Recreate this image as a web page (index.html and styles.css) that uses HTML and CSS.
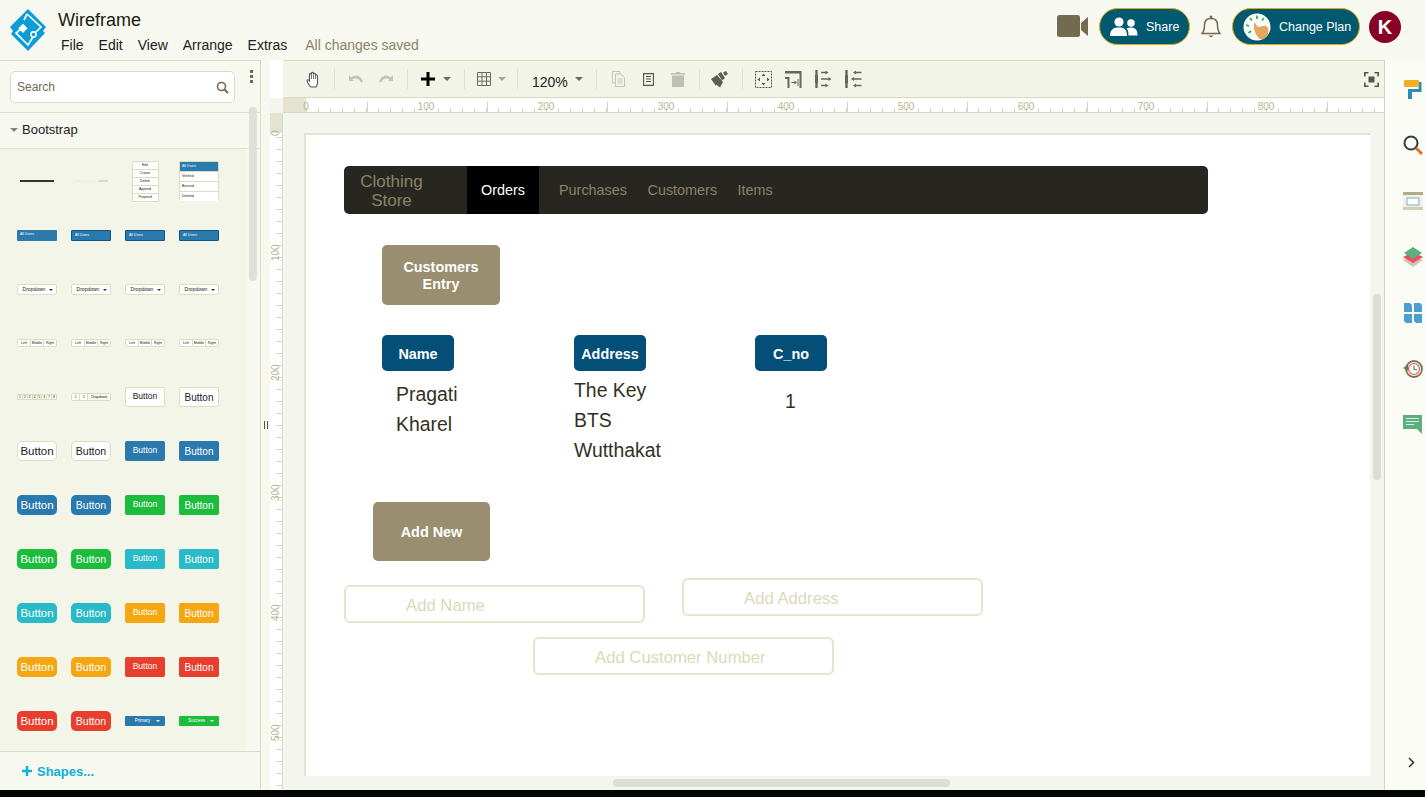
FILE: index.html

```html
<!DOCTYPE html>
<html lang="en">
<head>
    <meta charset="UTF-8">
    <title>Wireframe</title>
    <link rel="stylesheet" href="styles.css">
</head>
<body>
    <header class="topbar">
        <svg class="logo" width="38" height="44" viewBox="0 0 38 44">
            <path d="M19 1L37 19L34 23L36 25L19 43L2 26L4 23L1 19Z" fill="#0c9cd6"/>
            <path d="M18 6L32 19L26.500 24.500M12 21L7 25L19 37L24 29M18 6L15 12" fill="none" stroke="#fff" stroke-width="1.700"/>
            <rect x="11" y="17" width="6.500" height="6.500" transform="rotate(45 14 20)" fill="#fff"/>
            <circle cx="24.500" cy="26.500" r="2.600" fill="none" stroke="#fff" stroke-width="1.600"/>
        </svg>
        <div class="title-block">
            <div class="doc-title">Wireframe</div>
            <nav class="menu">
                <span>File</span><span>Edit</span><span>View</span><span>Arrange</span><span>Extras</span>
                <span class="saved">All changes saved</span>
            </nav>
        </div>
        <div class="top-actions">
            <svg width="32" height="23" viewBox="0 0 32 23">
                <rect x="0" y="0" width="23" height="22" rx="2.500" fill="#746a4f"/>
                <path d="M24 8L31 2V21L24 15Z" fill="#746a4f"/>
            </svg>
            <div class="pill share-pill">
                <svg width="28" height="20" viewBox="0 0 28 20">
                    <circle cx="9" cy="5" r="4.600" fill="#fff"/>
                    <path d="M0 19C0 12 4 10.500 9 10.500S17 12 17 19Z" fill="#fff"/>
                    <circle cx="21" cy="6" r="3.800" fill="#fff"/>
                    <path d="M18.500 18.500C18.500 14 17.500 12.500 16.500 11.500C18 10.800 19.500 10.500 21 10.500C25 10.500 27.500 12.500 27.500 18.500Z" fill="#fff"/>
                </svg>
                <span>Share</span>
            </div>
            <svg class="bell" width="20" height="23" viewBox="0 0 20 23">
                <path d="M1 18.500C3 16.500 3.500 15 3.500 10C3.500 6 6 3.500 10 3.500S16.500 6 16.500 10C16.500 15 17 16.500 19 18.500Z" fill="none" stroke="#746a4f" stroke-width="1.500"/>
                <circle cx="10" cy="2" r="1.500" fill="#746a4f"/>
                <path d="M7.500 20.500H12.500L10 22.500Z" fill="#746a4f"/>
            </svg>
            <div class="pill plan-pill">
                <svg width="28" height="28" viewBox="0 0 28 28">
                    <circle cx="14" cy="14" r="13.500" fill="#fff"/>
                    <path d="M14 2.500V6M7 5L9 7.500M21 5L19 7.500M3 12L6 13M5.500 20L8 18" stroke="#1cbd3c" stroke-width="1.800"/>
                    <path d="M11 9L15 14L22 12.500C25 13 26 17 25 21C24 25 20 27 17 26C14 24 12 20 11 16Z" fill="#e8a55e"/>
                </svg>
                <span>Change Plan</span>
            </div>
            <div class="avatar">K</div>
        </div>
    </header>

    <main class="workspace">
        <aside class="sidebar">
            <div class="search-row">
                <div class="search">
                    <span>Search</span>
                    <svg width="13" height="13" viewBox="0 0 13 13">
                        <circle cx="5.500" cy="5.500" r="4" fill="none" stroke="#746a4f" stroke-width="1.600"/>
                        <path d="M8.500 8.500L12 12" stroke="#746a4f" stroke-width="2"/>
                    </svg>
                </div>
                <div class="dots"><i></i><i></i><i></i></div>
            </div>
            <div class="section-head"><b class="caret"></b>Bootstrap</div>
            <div class="palette">
                <div class="cell"><div class="rule-line"></div></div>
                <div class="cell"><div class="rule-faint"></div></div>
                <div class="cell">
                    <div class="mini-menu"><span>Edit</span><span>Create</span><span>Delete</span><span>Append</span><span>Prepend</span></div>
                </div>
                <div class="cell">
                    <div class="mini-list"><span class="on">All Users</span><span>Verified</span><span>Banned</span><span>Deleted</span></div>
                </div>

                <div class="cell"><div class="mini-bar">All Users</div></div>
                <div class="cell"><div class="mini-bar dark">All Users</div></div>
                <div class="cell"><div class="mini-bar dark">All Users</div></div>
                <div class="cell"><div class="mini-bar dark">All Users</div></div>

                <div class="cell"><div class="mini-drop">Dropdown<b></b></div></div>
                <div class="cell"><div class="mini-drop">Dropdown<b></b></div></div>
                <div class="cell"><div class="mini-drop">Dropdown<b></b></div></div>
                <div class="cell"><div class="mini-drop">Dropdown<b></b></div></div>

                <div class="cell"><div class="mini-group"><span>Left</span><span>Middle</span><span>Right</span></div></div>
                <div class="cell"><div class="mini-group"><span>Left</span><span>Middle</span><span>Right</span></div></div>
                <div class="cell"><div class="mini-group"><span>Left</span><span>Middle</span><span>Right</span></div></div>
                <div class="cell"><div class="mini-group"><span>Left</span><span>Middle</span><span>Right</span></div></div>

                <div class="cell"><div class="mini-pages"><span>1</span><span>2</span><span>3</span><span>4</span><span>5</span><span>6</span><span>7</span><span>8</span></div></div>
                <div class="cell"><div class="mini-group split"><span>1</span><span>2</span><span>Dropdown</span></div></div>
                <div class="cell"><div class="btn size-a white">Button</div></div>
                <div class="cell"><div class="btn size-b white">Button</div></div>

                <div class="cell"><div class="btn size-c white">Button</div></div>
                <div class="cell"><div class="btn size-d white">Button</div></div>
                <div class="cell"><div class="btn size-a blue">Button</div></div>
                <div class="cell"><div class="btn size-b blue">Button</div></div>

                <div class="cell"><div class="btn size-c blue">Button</div></div>
                <div class="cell"><div class="btn size-d blue">Button</div></div>
                <div class="cell"><div class="btn size-a green">Button</div></div>
                <div class="cell"><div class="btn size-b green">Button</div></div>

                <div class="cell"><div class="btn size-c green">Button</div></div>
                <div class="cell"><div class="btn size-d green">Button</div></div>
                <div class="cell"><div class="btn size-a teal">Button</div></div>
                <div class="cell"><div class="btn size-b teal">Button</div></div>

                <div class="cell"><div class="btn size-c teal">Button</div></div>
                <div class="cell"><div class="btn size-d teal">Button</div></div>
                <div class="cell"><div class="btn size-a orange">Button</div></div>
                <div class="cell"><div class="btn size-b orange">Button</div></div>

                <div class="cell"><div class="btn size-c orange">Button</div></div>
                <div class="cell"><div class="btn size-d orange">Button</div></div>
                <div class="cell"><div class="btn size-a red">Button</div></div>
                <div class="cell"><div class="btn size-b red">Button</div></div>

                <div class="cell"><div class="btn size-c red">Button</div></div>
                <div class="cell"><div class="btn size-d red">Button</div></div>
                <div class="cell"><div class="mini-split blue">Primary<b></b></div></div>
                <div class="cell"><div class="mini-split green">Success<b></b></div></div>
            </div>
            <div class="side-scroll"></div>
            <div class="shapes-link">
                <svg width="10" height="10" viewBox="0 0 10 10"><path d="M3.800 0H6.200V3.800H10V6.200H6.200V10H3.800V6.200H0V3.800H3.800Z" fill="#0db0d8"/></svg>
                <span>Shapes...</span>
            </div>
        </aside>

        <div class="gutter"><i class="splitter"></i></div>

        <section class="editor">
            <div class="patch"></div>
            <div class="toolbar">
                <div class="tool first">
                    <svg width="15" height="17" viewBox="0 0 15 17">
                        <path d="M4 15C2.500 13 1 11 1 9.500C1 8.500 2.500 8.500 3.500 10V3.500C3.500 2 5 2 5.500 3.500V2.500C5.500 1 7.500 1 7.500 2.500V3C8 1.800 9.500 2 9.500 3.500V4.500C10 3.500 11.500 3.800 11.500 5V12C11.500 14 11 15 10 16H5Z" fill="#fff" stroke="#555" stroke-width="1.100"/>
                        <path d="M5.500 3.500V8M7.500 3V8M9.500 4V8" stroke="#555" stroke-width="0.800"/>
                    </svg>
                </div>
                <i class="sep"></i>
                <div class="tool">
                    <svg width="16" height="10" viewBox="0 0 16 10"><path d="M1 1V7H6L4.500 5.500C7 3.500 11 4 13 8.500L15 8C13 1 7 0 3.500 3.500Z" fill="#c5c5b6"/></svg>
                </div>
                <div class="tool">
                    <svg width="16" height="10" viewBox="0 0 16 10"><path d="M15 1V7H10L11.500 5.500C9 3.500 5 4 3 8.500L1 8C3 1 9 0 12.500 3.500Z" fill="#c5c5b6"/></svg>
                </div>
                <i class="sep"></i>
                <div class="tool plus-tool">
                    <svg width="14" height="14" viewBox="0 0 14 14"><path d="M5.500 0H8.500V5.500H14V8.500H8.500V14H5.500V8.500H0V5.500H5.500Z" fill="#000"/></svg>
                </div>
                <b class="caret tool-caret"></b>
                <i class="sep wide"></i>
                <div class="tool table-tool">
                    <svg width="14" height="14" viewBox="0 0 14 14"><path d="M.500 .500H13.500V13.500H.500ZM.500 4.800H13.500M.500 9.200H13.500M5 .500V13.500M9.500 .500V13.500" fill="none" stroke="#6b6b5e"/></svg>
                </div>
                <b class="caret tool-caret light"></b>
                <i class="sep mid"></i>
                <div class="zoom-level">120%</div>
                <b class="caret tool-caret"></b>
                <i class="sep zoom-sep"></i>
                <div class="tool">
                    <svg width="13" height="16" viewBox="0 0 13 16"><path d="M.500 .500H8V3M.500 .500V12H3.500M3.500 3H8.500L12.500 6.500V15.500H3.500ZM5.500 8H10.500M5.500 10H10.500M5.500 12H10.500" fill="none" stroke="#c5c5b6"/></svg>
                </div>
                <div class="tool">
                    <svg width="11" height="13" viewBox="0 0 11 13"><path d="M.600 .600H10.400V12.400H.600ZM3 3.500H8M3 6H8M3 8.500H8" fill="none" stroke="#55554c" stroke-width="1.100"/></svg>
                </div>
                <div class="tool">
                    <svg width="14" height="15" viewBox="0 0 14 15"><path d="M5 0H9V1H14V2.500H0V1H5ZM1 3.500H13V15H1Z" fill="#c0c0b2"/></svg>
                </div>
                <i class="sep"></i>
                <div class="tool broom-tool">
                    <svg width="18" height="17" viewBox="0 0 18 17">
                        <path d="M0 8L6 4L12 11L9 16.500L5 13.500L5 15Z" fill="#5e5e55"/>
                        <path d="M7 3L10 1L14 7L11 9.500Z" fill="#5e5e55"/>
                        <path d="M12 1.500L15 0L17 3L14 5Z" fill="#5e5e55"/>
                    </svg>
                </div>
                <i class="sep tight"></i>
                <div class="tool">
                    <svg width="17" height="17" viewBox="0 0 17 17">
                        <rect x=".500" y=".500" width="16" height="16" fill="none" stroke="#55554c" stroke-dasharray="2 1"/>
                        <path d="M8.500 2.500L10.500 5H6.500ZM8.500 14.500L10.500 12H6.500ZM2.500 8.500L5 6.500V10.500ZM14.500 8.500L12 6.500V10.500Z" fill="#55554c"/>
                    </svg>
                </div>
                <div class="tool">
                    <svg width="17" height="17" viewBox="0 0 17 17">
                        <path d="M0 0H16.500V17H14.500V2.500H0Z" fill="#66665c"/>
                        <path d="M0 6H4.500V17H2.500V8H0Z" fill="#66665c"/>
                        <path d="M6.500 11.500H11" stroke="#66665c"/>
                        <path d="M9.500 9.500L12 11.500L9.500 13.500Z" fill="#66665c"/>
                        <path d="M13 8V15" stroke="#66665c"/>
                    </svg>
                </div>
                <div class="tool">
                    <svg width="17" height="18" viewBox="0 0 17 18">
                        <path d="M1.500 0V18" stroke="#66665c" stroke-width="2.400"/>
                        <path d="M0 5H3V13H0Z" fill="#66665c"/>
                        <path d="M6 2.500H11M6 9H14M6 15.500H11" stroke="#66665c" stroke-width="1.300"/>
                        <path d="M10.500 .500L13.500 2.500L10.500 4.500ZM13.500 7L16.500 9L13.500 11ZM10.500 13.500L13.500 15.500L10.500 17.500Z" fill="#66665c"/>
                    </svg>
                </div>
                <div class="tool">
                    <svg width="17" height="18" viewBox="0 0 17 18">
                        <path d="M1.500 0V18" stroke="#66665c" stroke-width="2.400"/>
                        <path d="M0 5H3V13H0Z" fill="#66665c"/>
                        <path d="M11 2.500H16.500M9 9H16.500M11 15.500H16.500" stroke="#66665c" stroke-width="1.300"/>
                        <path d="M11 .500L8 2.500L11 4.500ZM9 7L6 9L9 11ZM11 13.500L8 15.500L11 17.500Z" fill="#66665c"/>
                    </svg>
                </div>
                <div class="tool full-tool">
                    <svg width="15" height="15" viewBox="0 0 15 15">
                        <path d="M.800 4.500V.800H4.500M10.500 .800H14.200V4.500M14.200 10.500V14.200H10.500M4.500 14.200H.800V10.500" fill="none" stroke="#55554c" stroke-width="1.600"/>
                        <rect x="4.500" y="4.500" width="6" height="6" fill="#55554c"/>
                    </svg>
                </div>
            </div>

            <div class="ruler-blank"></div>
            <div class="h-ruler">
                <span>0</span><span>100</span><span>200</span><span>300</span><span>400</span><span>500</span><span>600</span><span>700</span><span>800</span>
            </div>

            <div class="v-ruler">
                <span>0</span><span>100</span><span>200</span><span>300</span><span>400</span><span>500</span>
            </div>
            <div class="canvas">
                <div class="page">
                    <div class="wf-nav">
                        <div class="wf-brand">Clothing<br>Store</div>
                        <div class="wf-active">Orders</div>
                        <div class="wf-links"><span>Purchases</span><span>Customers</span><span>Items</span></div>
                    </div>
                    <div class="wf-btn tan entry">Customers<br>Entry</div>
                    <div class="wf-btn navy col-name">Name</div>
                    <div class="wf-btn navy col-address">Address</div>
                    <div class="wf-btn navy col-no">C_no</div>
                    <div class="wf-text val-name">Pragati<br>Kharel</div>
                    <div class="wf-text val-address">The Key<br>BTS<br>Wutthakat</div>
                    <div class="wf-text val-no">1</div>
                    <div class="wf-btn tan add-new">Add New</div>
                    <div class="wf-input in-name">Add Name</div>
                    <div class="wf-input in-address">Add Address</div>
                    <div class="wf-input in-number">Add Customer Number</div>
                </div>
                <div class="thumb-v"></div>
                <div class="thumb-h"></div>
            </div>
        </section>

        <aside class="rail">
            <svg width="18" height="19" viewBox="0 0 18 19">
                <rect x="0" y="0" width="15" height="7" rx="1" fill="#eeb022"/>
                <path d="M15 2H17.500V12H8V19H4V9H14.500V7H15Z" fill="#2f8ab5"/>
            </svg>
            <svg width="20" height="21" viewBox="0 0 20 21">
                <circle cx="8" cy="8" r="6.500" fill="#fff" stroke="#2f4040" stroke-width="2"/>
                <path d="M13 13L19 19" stroke="#e8711f" stroke-width="3"/>
            </svg>
            <svg width="20" height="18" viewBox="0 0 20 18">
                <rect x="0" y="0" width="20" height="18" fill="#f3f1e4"/>
                <rect x="0" y="0" width="20" height="3" fill="#b0ab90"/>
                <rect x="0" y="15" width="20" height="3" fill="#d3ceb6"/>
                <rect x="4" y="6" width="12" height="7" fill="#fff" stroke="#6eb2d0"/>
            </svg>
            <svg width="20" height="20" viewBox="0 0 20 20">
                <path d="M0 13L10 8L20 13L10 20Z" fill="#cfc8aa"/>
                <path d="M0 10L10 5L20 10L10 16Z" fill="#ee4d66"/>
                <path d="M1 6L10 0L19 6L10 12Z" fill="#5bae7d"/>
            </svg>
            <svg width="18" height="20" viewBox="0 0 18 20">
                <path d="M0 0H6L8 2V9H0ZM10 0H16L18 2V9H10ZM0 11H8V20H2L0 18ZM10 11H18V20H12L10 18Z" fill="#4a9fd0"/>
            </svg>
            <svg width="20" height="20" viewBox="0 0 20 20">
                <circle cx="11" cy="10" r="8" fill="#fff" stroke="#7a7355" stroke-width="1.800"/>
                <circle cx="11" cy="10" r="5.500" fill="#fff" stroke="#e85a42" stroke-width="1.200"/>
                <path d="M11 6.500V10.500H14" fill="none" stroke="#3aa060" stroke-width="1.200"/>
                <path d="M0 9L5 6V12Z" fill="#7a7355"/>
            </svg>
            <svg width="20" height="20" viewBox="0 0 20 20">
                <path d="M0 0H19V19L14 14H0Z" fill="#5bae7d"/>
                <path d="M3 3.500H16M3 6.500H16M3 9.500H11" stroke="#dff0e4" stroke-width="1"/>
            </svg>
            <svg class="rail-chevron" width="7" height="11" viewBox="0 0 7 11"><path d="M1 1L5.500 5.500L1 10" fill="none" stroke="#333" stroke-width="1.500"/></svg>
        </aside>
    </main>
    <div class="bottom-edge"></div>
</body>
</html>
```

FILE: styles.css

```css
* {
    box-sizing: border-box;
}
body {
    margin: 0;
    width: 1425px;
    height: 797px;
    overflow: hidden;
    font-family: "Liberation Sans", Arial, sans-serif;
    background-color: #f7f8f0;
    color: #1c1a10;
    display: flex;
    flex-direction: column;
}

/* top bar */
.topbar {
    height: 60px;
    flex: none;
    display: flex;
    align-items: flex-start;
}
.logo {
    margin: 8px 0 0 9px;
    flex: none;
}
.title-block {
    margin-left: 11px;
    padding-top: 10px;
}
.doc-title {
    font-size: 18px;
    line-height: 21px;
}
.menu {
    display: flex;
    margin: 6px 0 0 3px;
    font-size: 14px;
    line-height: 17px;
    color: #222;
}
.menu span {
    margin-right: 15px;
}
.menu .saved {
    margin-left: 3px;
    color: #8a8468;
}
.top-actions {
    margin-left: auto;
    display: flex;
    align-items: center;
    height: 53px;
    padding-right: 24px;
}
.pill {
    height: 37px;
    border-radius: 19px;
    background-color: #00596f;
    border: 1.5px solid #e9a90c;
    color: #fff;
    font-size: 12.500px;
    display: flex;
    align-items: center;
}
.share-pill {
    width: 91px;
    margin-left: 10px;
    padding-left: 10px;
}
.share-pill span {
    margin-left: 8px;
}
.bell {
    margin-left: 11px;
}
.plan-pill {
    width: 128px;
    margin-left: 11px;
    padding-left: 10px;
}
.plan-pill span {
    margin-left: 8px;
}
.avatar {
    width: 32px;
    height: 32px;
    margin-left: 9px;
    border-radius: 50%;
    background-color: #880025;
    color: #fff;
    font-weight: bold;
    font-size: 20px;
    line-height: 32px;
    text-align: center;
}

/* main area */
.workspace {
    flex: 1;
    display: flex;
    min-height: 0;
}
.sidebar {
    width: 261px;
    flex: none;
    position: relative;
    border-right: 1px solid #dcdcc0;
    border-top: 1px solid #dcdcc0;
    display: flex;
    flex-direction: column;
}
.search-row {
    height: 52px;
    flex: none;
    padding: 10px 0 0 10px;
    display: flex;
    border-bottom: 1px solid #e0e0c8;
}
.search {
    width: 225px;
    height: 32px;
    background-color: #fff;
    border: 1px solid #dcdcc0;
    border-radius: 5px;
    display: flex;
    align-items: center;
    justify-content: space-between;
    padding: 0 5px 0 6px;
    font-size: 12px;
    color: #746a4f;
}
.dots {
    margin: -1px 0 0 15px;
}
.dots i {
    display: block;
    width: 3px;
    height: 3px;
    margin-bottom: 2px;
    background-color: #746a4f;
}
.section-head {
    height: 36px;
    flex: none;
    display: flex;
    align-items: center;
    padding: 0 0 2px 10px;
    font-size: 13px;
    color: #222;
    border-bottom: 1px solid #e0e0c8;
}
.caret {
    display: inline-block;
    width: 0;
    height: 0;
    border-left: 4px solid transparent;
    border-right: 4px solid transparent;
    border-top: 4px solid #8a8468;
    margin-right: 4px;
}
.palette {
    flex: 1;
    width: 246px;
    min-height: 0;
    padding: 5px 0 0 10px;
    background-color: #f3f5e8;
    display: grid;
    grid-template-columns: repeat(4, 54px);
    grid-auto-rows: 54px;
    overflow: hidden;
}
.side-scroll {
    position: absolute;
    left: 249px;
    top: 46px;
    width: 8px;
    height: 174px;
    border-radius: 4px;
    background-color: #dfe1d8;
}
.shapes-link {
    height: 39px;
    flex: none;
    border-top: 1px solid #dcdcc0;
    padding-left: 22px;
    font-size: 13px;
    font-weight: bold;
    color: #0db0d8;
    display: flex;
    align-items: center;
    gap: 5px;
}

/* palette thumbnails */
.cell {
    display: flex;
    align-items: center;
    justify-content: center;
}
.rule-line {
    width: 34px;
    height: 2px;
    background-color: #333;
}
.rule-faint {
    width: 33px;
    height: 2px;
    background: linear-gradient(90deg, #eee 0 24px, #dcdcc0 24px);
}
.mini-menu {
    width: 27px;
    display: flex;
    flex-direction: column;
    border: 1px solid #dcdcc0;
    border-radius: 1px;
    background-color: #dcdcc0;
    gap: 1px;
}
.mini-menu span {
    height: 7px;
    background-color: #fff;
    font-size: 3.500px;
    line-height: 7px;
    text-align: center;
}
.mini-list {
    width: 40px;
    height: 40px;
    display: flex;
    flex-direction: column;
    border: 1px solid #dcdcc0;
    border-radius: 2px;
    background-color: #dcdcc0;
    gap: 1px;
}
.mini-list span {
    flex: 1;
    background-color: #fff;
    font-size: 3.500px;
    line-height: 9px;
    padding-left: 2px;
}
.mini-list .on {
    background-color: #2a7aae;
    color: #fff;
}
.mini-bar {
    width: 40px;
    height: 11px;
    background-color: #2a7aae;
    border-radius: 1px;
    font-size: 3.500px;
    line-height: 9px;
    padding-left: 3px;
    color: #fff;
}
.mini-bar.dark {
    border: 1px solid #0f5580;
    line-height: 8px;
}
.mini-drop {
    width: 40px;
    height: 11px;
    background-color: #fff;
    border: 1px solid #dcdcc0;
    border-radius: 2px;
    font-size: 5px;
    line-height: 9px;
    text-align: center;
    padding-right: 6px;
    position: relative;
}
.mini-drop b,
.mini-split b {
    position: absolute;
    right: 3px;
    top: 4px;
    border-left: 2px solid transparent;
    border-right: 2px solid transparent;
    border-top: 2px solid #333;
}
.mini-group {
    width: 40px;
    height: 8px;
    display: flex;
    gap: 1px;
    background-color: #dcdcc0;
    border: 1px solid #dcdcc0;
    border-radius: 2px;
}
.mini-group span {
    flex: 1;
    background-color: #fff;
    font-size: 3.500px;
    line-height: 6px;
    text-align: center;
}
.mini-group.split span:last-child {
    flex: 3;
    background-color: #f7f8f0;
}
.mini-pages {
    width: 40px;
    height: 6px;
    display: flex;
    gap: 1px;
    background-color: #dcdcc0;
    border-radius: 1px;
    padding: 1px;
}
.mini-pages span {
    flex: 1;
    background-color: #f7f8f0;
    font-size: 3px;
    line-height: 4px;
    text-align: center;
}
.mini-split {
    width: 40px;
    height: 10px;
    border-radius: 1px;
    color: #fff;
    font-size: 4.500px;
    line-height: 10px;
    text-align: center;
    padding-right: 5px;
    position: relative;
}
.mini-split b {
    border-top-color: #fff;
    right: 5px;
}
.btn {
    width: 40px;
    height: 20px;
    display: flex;
    align-items: center;
    justify-content: center;
    color: #fff;
}
.size-a {
    font-size: 8.500px;
    border-radius: 2px;
    padding-bottom: 2px;
}
.size-b {
    font-size: 10px;
    border-radius: 2px;
}
.size-c {
    font-size: 11.500px;
    border-radius: 5px;
}
.size-d {
    font-size: 10.500px;
    border-radius: 5px;
}
.btn.white {
    background-color: #fff;
    border: 1.500px solid #dcdcc0;
    color: #222;
}
.blue {
    background-color: #2a7aae;
}
.green {
    background-color: #1cbd3c;
}
.teal {
    background-color: #29bac7;
}
.orange {
    background-color: #f5a712;
}
.red {
    background-color: #e83e2d;
}
.gutter {
    width: 9px;
    flex: none;
    position: relative;
}
.splitter {
    position: absolute;
    left: 3px;
    top: 361px;
    width: 4px;
    height: 8px;
    border-left: 1px solid #55554c;
    border-right: 1px solid #55554c;
}

/* editor */
.editor {
    flex: 1;
    min-width: 0;
    display: grid;
    grid-template-columns: 13px 1fr;
    grid-template-rows: 38px 15px 1fr;
    border-right: 1px solid #d6d6c0;
}
.patch {
    background-color: #fff;
}
.toolbar {
    background-color: #f3f4e8;
    border-top: 1px solid #d9d9c0;
    border-bottom: 1px solid #d9d9c0;
    display: flex;
    align-items: center;
    padding-left: 15px;
}
.tool {
    width: 30px;
    height: 30px;
    flex: none;
    display: flex;
    align-items: center;
    justify-content: center;
}
.plus-tool {
    width: 28px;
}
.table-tool {
    width: 26px;
}
.broom-tool {
    padding-right: 3px;
}
.full-tool {
    margin-left: auto;
    margin-right: -2px;
}
.sep {
    width: 1px;
    height: 20px;
    flex: none;
    margin: 0 6px;
    background-color: #e0e0c8;
}
.sep.wide {
    margin-left: 12px;
}
.sep.mid {
    margin: 0 14px 0 10px;
}
.sep.zoom-sep {
    margin-left: 12px;
    margin-right: 6px;
}
.sep.tight {
    margin-right: 5px;
}
.tool-caret {
    margin: 0 1px;
    border-top-color: #746a4f;
}
.tool-caret.light {
    border-top-color: #aaa68e;
}
.zoom-level {
    width: 42px;
    font-size: 14px;
    padding-top: 5px;
    color: #222;
}
.ruler-blank {
    background-color: #f3f5ee;
}
.h-ruler {
    display: flex;
    overflow: hidden;
    font-size: 10px;
    line-height: 17px;
    color: #b9b391;
    border-bottom: 1px solid #d9d9c0;
    background:
        repeating-linear-gradient(90deg, #d8d6ba -59px, #d8d6ba -58px, transparent -58px, transparent 61px) 23px 100% / calc(100% - 23px) 10px no-repeat,
        repeating-linear-gradient(90deg, #d8d6ba 0, #d8d6ba 1px, transparent 1px, transparent 12px) 23px 100% / calc(100% - 23px) 4px no-repeat,
        linear-gradient(90deg, #e3e3d0 23px, #fff 23px);
}
.h-ruler span {
    width: 120px;
    flex: none;
    text-align: center;
}
.h-ruler span:first-child {
    margin-left: -37px;
}
.v-ruler {
    display: flex;
    flex-direction: column;
    overflow: hidden;
    font-size: 10px;
    line-height: 11px;
    color: #b9b391;
    border-right: 1px solid #d9d9c0;
    background:
        linear-gradient(#e3e3d0, #e3e3d0) 0 0 / 100% 20px no-repeat,
        repeating-linear-gradient(180deg, #d8d6ba 0, #d8d6ba 1px, transparent 1px, transparent 12px) 100% 0 / 6px 100% no-repeat,
        #fff;
}
.v-ruler span {
    height: 120px;
    flex: none;
    writing-mode: vertical-rl;
    transform: rotate(180deg);
    text-align: center;
}
.v-ruler span:first-child {
    margin-top: -40px;
}
.canvas {
    position: relative;
    background-color: #f3f5ee;
    overflow: hidden;
}
.page {
    position: absolute;
    left: 21px;
    top: 20px;
    width: 1066px;
    height: 643px;
    background-color: #fff;
    box-shadow: inset 2px 2px 0 #e4e4cd;
}
.thumb-v {
    position: absolute;
    left: 1090px;
    top: 181px;
    width: 8px;
    height: 186px;
    border-radius: 4px;
    background-color: #dbded7;
}
.thumb-h {
    position: absolute;
    left: 330px;
    top: 666px;
    width: 337px;
    height: 8px;
    border-radius: 4px;
    background-color: #dbded7;
}

/* wireframe on the page */
.wf-nav {
    position: absolute;
    left: 40px;
    top: 33px;
    width: 864px;
    height: 48px;
    background-color: #272620;
    border-radius: 5px;
    display: flex;
    overflow: hidden;
    color: #8a8468;
    font-size: 14.400px;
}
.wf-brand {
    width: 123px;
    padding-right: 28px;
    font-size: 17px;
    line-height: 19px;
    padding-top: 6px;
    text-align: center;
}
.wf-active {
    width: 72px;
    background-color: #000;
    color: #fff;
    line-height: 48px;
    text-align: center;
}
.wf-links {
    display: flex;
    gap: 20.500px;
    padding-left: 20px;
    line-height: 48px;
}
.wf-btn {
    position: absolute;
    border-radius: 5px;
    color: #fff;
    font-weight: bold;
    font-size: 14.400px;
    line-height: 17px;
    padding-top: 2px;
    display: flex;
    align-items: center;
    justify-content: center;
    text-align: center;
}
.tan {
    background-color: #998e70;
}
.navy {
    background-color: #034f78;
    width: 72px;
    height: 36px;
    top: 202px;
}
.entry {
    left: 78px;
    top: 112px;
    width: 118px;
    height: 60px;
}
.col-name {
    left: 78px;
}
.col-address {
    left: 270px;
}
.col-no {
    left: 451px;
}
.add-new {
    left: 69px;
    top: 369px;
    width: 117px;
    height: 59px;
}
.wf-text {
    position: absolute;
    font-size: 19.400px;
    line-height: 30px;
    color: #332f1e;
}
.val-name {
    left: 92px;
    top: 246px;
}
.val-address {
    left: 270px;
    top: 242px;
}
.val-no {
    left: 481px;
    top: 253px;
}
.wf-input {
    position: absolute;
    width: 301px;
    height: 38px;
    border: 2px solid #e6e5cc;
    border-radius: 6px;
    padding-left: 60px;
    font-size: 16.700px;
    line-height: 37px;
    color: #dcd9b6;
}
.in-name {
    left: 40px;
    top: 452px;
}
.in-address {
    left: 378px;
    top: 445px;
}
.in-number {
    left: 229px;
    top: 504px;
}

/* right rail */
.rail {
    width: 40px;
    flex: none;
    position: relative;
    background-color: #fcfcf6;
    display: grid;
    grid-auto-rows: 56px;
    align-items: center;
    justify-items: center;
    padding: 1px 0 0 16px;
}
.rail-chevron {
    position: absolute;
    left: 23px;
    top: 697px;
}
.bottom-edge {
    height: 7px;
    flex: none;
    background-color: #020706;
}
```
